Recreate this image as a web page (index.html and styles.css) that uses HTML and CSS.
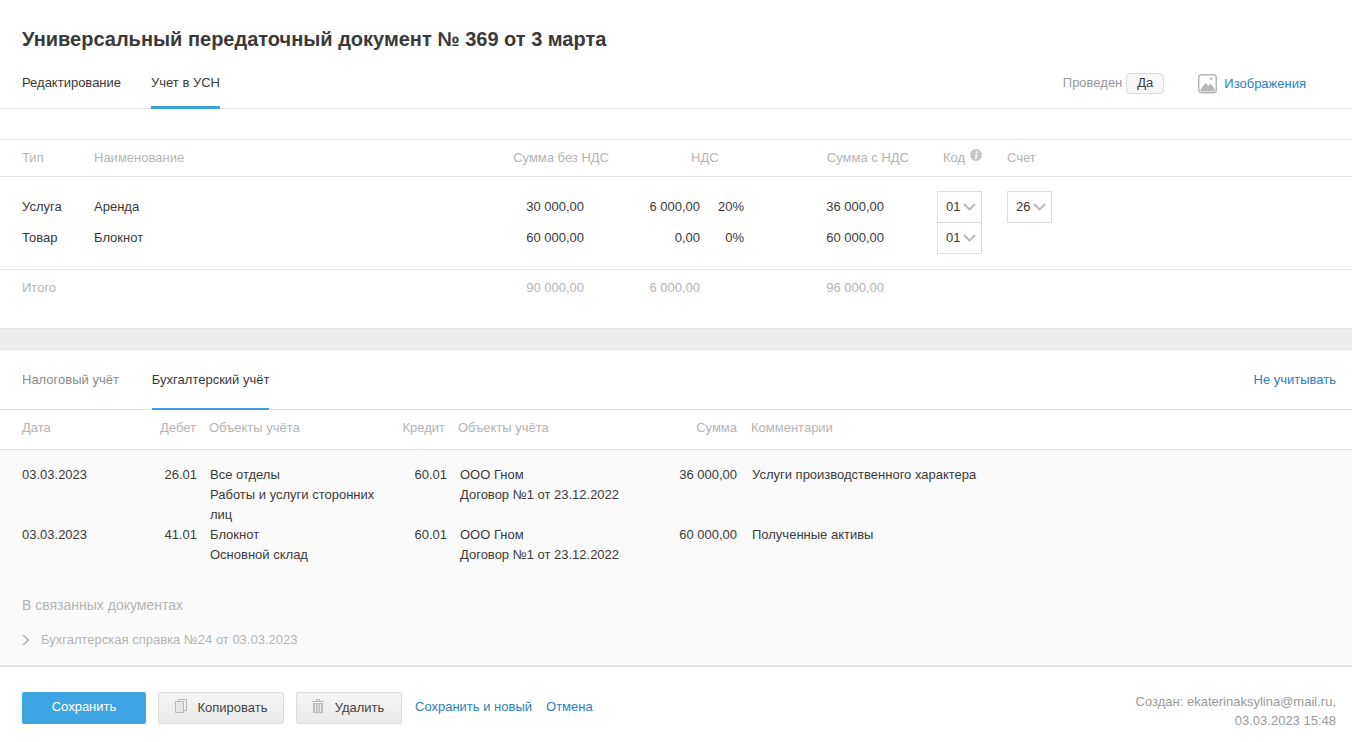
FILE: index.html
```html
<!DOCTYPE html>
<html lang="ru">
<head>
<meta charset="utf-8">
<title>Универсальный передаточный документ</title>
<link rel="stylesheet" href="styles.css">
</head>
<body>
<header class="doc-head">
  <h1 class="doc-title">Универсальный передаточный документ № 369 от 3 марта</h1>
  <div class="doc-bar">
    <nav class="tabs">
      <a class="tab">Редактирование</a>
      <a class="tab tab-active">Учет в УСН</a>
    </nav>
    <div class="doc-tools">
      <span class="posted-label">Проведен</span>
      <span class="posted-pill">Да</span>
      <svg class="img-icon" width="20" height="20" viewBox="0 0 20 20"><rect x="0.750" y="0.750" width="17.500" height="18" rx="3" fill="#fff" stroke="#b8b8b8" stroke-width="1.500"/><path d="M2.500 17.500V15.500L7.500 9L10.500 12L12.500 9.500L16.500 14.500V17.500Z" fill="#b8b8b8"/><circle cx="13" cy="4.800" r="1.300" fill="#b8b8b8"/></svg>
      <a class="link">Изображения</a>
    </div>
  </div>
</header>

<section class="usn">
  <div class="usn-grid usn-head">
    <div>Тип</div>
    <div>Наименование</div>
    <div class="num">Сумма без НДС</div>
    <div class="head-vat">НДС</div>
    <div class="num">Сумма с НДС</div>
    <div class="head-code">Код <svg class="info" width="12" height="12" viewBox="0 0 12 12"><circle cx="6" cy="6" r="6" fill="#c6c6c6"/><path d="M5.600 5H7.400L6.700 9.700H4.900Z" fill="#fff"/><path d="M5.900 2.400H7.700L7.500 4.100H5.700Z" fill="#fff"/></svg></div>
    <div>Счет</div>
  </div>
  <div class="usn-body">
    <div class="usn-grid usn-row">
      <div>Услуга</div>
      <div>Аренда</div>
      <div class="num val-sum">30 000,00</div>
      <div class="num">6 000,00</div>
      <div class="num">20%</div>
      <div class="num val-sum">36 000,00</div>
      <div class="sel">01<svg width="13" height="8" viewBox="0 0 13 8"><path d="M1 1L6.500 6.500L12 1" fill="none" stroke="#bbb" stroke-width="2"/></svg></div>
      <div class="sel">26<svg width="13" height="8" viewBox="0 0 13 8"><path d="M1 1L6.500 6.500L12 1" fill="none" stroke="#bbb" stroke-width="2"/></svg></div>
    </div>
    <div class="usn-grid usn-row">
      <div>Товар</div>
      <div>Блокнот</div>
      <div class="num val-sum">60 000,00</div>
      <div class="num">0,00</div>
      <div class="num">0%</div>
      <div class="num val-sum">60 000,00</div>
      <div class="sel">01<svg width="13" height="8" viewBox="0 0 13 8"><path d="M1 1L6.500 6.500L12 1" fill="none" stroke="#bbb" stroke-width="2"/></svg></div>
    </div>
  </div>
  <div class="usn-grid usn-total">
    <div>Итого</div>
    <div></div>
    <div class="num val-sum">90 000,00</div>
    <div class="num">6 000,00</div>
    <div></div>
    <div class="num val-sum">96 000,00</div>
  </div>
</section>

<div class="band"></div>

<section class="acc">
  <div class="acc-bar">
    <nav class="tabs">
      <a class="tab tab-muted">Налоговый учёт</a>
      <a class="tab tab-active">Бухгалтерский учёт</a>
    </nav>
    <a class="link">Не учитывать</a>
  </div>
  <div class="acc-grid acc-head">
    <div>Дата</div>
    <div class="num">Дебет</div>
    <div>Объекты учёта</div>
    <div class="num">Кредит</div>
    <div>Объекты учёта</div>
    <div class="num">Сумма</div>
    <div>Комментарии</div>
  </div>
  <div class="acc-body">
    <div class="acc-grid acc-row">
      <div>03.03.2023</div>
      <div class="num">26.01</div>
      <div>Все отделы<br>Работы и услуги сторонних лиц</div>
      <div class="num">60.01</div>
      <div>ООО Гном<br>Договор №1 от 23.12.2022</div>
      <div class="num">36 000,00</div>
      <div>Услуги производственного характера</div>
    </div>
    <div class="acc-grid acc-row">
      <div>03.03.2023</div>
      <div class="num">41.01</div>
      <div>Блокнот<br>Основной склад</div>
      <div class="num">60.01</div>
      <div>ООО Гном<br>Договор №1 от 23.12.2022</div>
      <div class="num">60 000,00</div>
      <div>Полученные активы</div>
    </div>
    <h2 class="rel-title">В связанных документах</h2>
    <div class="rel-item">
      <svg width="8" height="12" viewBox="0 0 8 12"><path d="M1 1L6.500 6L1 11" fill="none" stroke="#b0b0b0" stroke-width="1.600"/></svg>
      <span>Бухгалтерская справка №24 от 03.03.2023</span>
    </div>
  </div>
</section>

<footer class="foot">
  <div class="foot-actions">
    <button class="btn btn-primary">Сохранить</button>
    <button class="btn btn-copy"><svg width="12" height="14" viewBox="0 0 12 14"><path d="M3.500 0.500H11.500V11.500H3.500Z" fill="#f0f0f0" stroke="#b8b8b8"/><path d="M0.500 2.500H8.500V13.500H0.500Z" fill="#e6e6e6" stroke="#b8b8b8"/></svg>Копировать</button>
    <button class="btn btn-del"><svg width="12" height="14" viewBox="0 0 12 14"><path d="M0 2H12V3H0ZM4 0H8V2H7V1H5V2H4Z" fill="#b8b8b8"/><path d="M1 4H11V14H1Z" fill="#bcbcbc"/><path d="M3.500 5V13M6 5V13M8.500 5V13" stroke="#ececec"/></svg>Удалить</button>
    <a class="link link-save">Сохранить и новый</a>
    <a class="link link-cancel">Отмена</a>
  </div>
  <div class="created">Создан: ekaterinaksylina@mail.ru,<br>03.03.2023 15:48</div>
</footer>
</body>
</html>
```

FILE: styles.css
```css
* { box-sizing: border-box; }
html, body { margin: 0; padding: 0; }
body {
  width: 1352px;
  height: 742px;
  overflow: hidden;
  background: #fff;
  font-family: "Liberation Sans", Arial, sans-serif;
  font-size: 13px;
  line-height: 20px;
  color: #3a3a3a;
}
.link { color: #2b7fc3; }
.num { text-align: right; }

.doc-head { height: 109px; border-bottom: 1px solid #e4e4e4; }
.doc-title {
  margin: 0;
  padding: 27px 22px 0;
  font-size: 20px;
  line-height: 24px;
  font-weight: bold;
  color: #3a3a3a;
}
.doc-bar {
  display: flex;
  justify-content: space-between;
  align-items: flex-start;
  padding: 22px 46px 0 22px;
}
.tabs { display: flex; gap: 30px; }
.tab { display: block; height: 36px; }
.tab-active { border-bottom: 3px solid #3ca2de; }
.tab-muted { color: #8a8a8a; }
.doc-tools { display: flex; align-items: center; height: 20px; }
.posted-label { color: #999; }
.posted-pill {
  width: 38px;
  height: 21px;
  margin-left: 4px;
  border: 1px solid #ddd;
  border-radius: 4px;
  background: #f7f7f7;
  text-align: center;
  line-height: 18px;
}
.img-icon { margin: 2px 6px 0 34px; }
.doc-tools .link { padding-top: 2px; }

.usn { margin-top: 30px; border-top: 1px solid #e4e4e4; height: 190px; border-bottom: 1px solid #e4e4e4; }
.usn-grid {
  display: grid;
  grid-template-columns: 72px 393px 122px 135px 165px 28px 70px 1fr;
  padding-left: 22px;
}
.usn-head {
  height: 37px;
  align-items: center;
  border-bottom: 1px solid #e4e4e4;
  color: #b4b4b4;
}
.head-vat { padding-left: 82px; }
.head-code { grid-column: 7; padding-left: 6px; }
.info { margin-left: 1px; vertical-align: 1px; }
.usn-body { padding: 14px 0 16px; border-bottom: 1px solid #e4e4e4; }
.usn-row { grid-template-columns: 72px 393px 122px 91px 44px 165px 28px 70px 1fr; height: 31px; align-items: center; }
.usn-row > :nth-child(7) { grid-column: 8; }
.val-sum { padding-right: 25px; }
.sel {
  display: flex;
  align-items: center;
  gap: 3px;
  align-self: start;
  width: 45px;
  height: 32px;
  padding-left: 8px;
  border: 1px solid #ddd;
  background: #fff;
}
.usn-total {
  grid-template-columns: 72px 393px 122px 91px 44px 165px;
  padding-top: 8px;
  color: #b4b4b4;
}

.band { height: 21px; background: #ececec; border-bottom: 1px solid #e4e4e4; }

.acc-bar {
  display: flex;
  justify-content: space-between;
  height: 60px;
  padding: 20px 16px 0 22px;
  border-bottom: 1px solid #e4e4e4;
}
.acc-bar .tabs { gap: 33px; }
.acc-bar .tab { height: 40px; border-bottom-width: 2px; }
.acc-bar .tab-muted { border: 0; }
.acc-grid {
  display: grid;
  padding-left: 22px;
}
.acc-head {
  grid-template-columns: 122px 52px 13px 180px 56px 13px 180px 99px 14px 1fr;
  height: 40px;
  padding-bottom: 4px;
  align-items: center;
  border-bottom: 1px solid #e4e4e4;
  color: #b4b4b4;
}
.acc-head > :nth-child(3), .acc-row > :nth-child(3) { grid-column: 4; }
.acc-head > :nth-child(4), .acc-row > :nth-child(4) { grid-column: 5; }
.acc-head > :nth-child(5), .acc-row > :nth-child(5) { grid-column: 7; }
.acc-head > :nth-child(6), .acc-row > :nth-child(6) { grid-column: 8; }
.acc-head > :nth-child(7), .acc-row > :nth-child(7) { grid-column: 10; }
.acc-row {
  grid-template-columns: 130px 45px 13px 170px 67px 13px 180px 97px 15px 1fr;
}
.acc-body {
  height: 217px;
  padding-top: 15px;
  background: #fafafa;
  border-bottom: 2px solid #e4e4e4;
}
.rel-title {
  margin: 30px 0 0 22px;
  font-size: 14px;
  line-height: 20px;
  font-weight: normal;
  color: #b4b4b4;
}
.rel-item {
  display: flex;
  align-items: center;
  gap: 11px;
  margin: 15px 0 0 22px;
  color: #b4b4b4;
}

.foot {
  display: flex;
  justify-content: space-between;
  padding: 25px 16px 0 22px;
}
.foot-actions { display: flex; align-items: flex-start; }
.btn {
  display: flex;
  align-items: center;
  justify-content: center;
  height: 32px;
  margin: 0;
  border-radius: 2px;
  font: inherit;
  color: #444;
}
.btn-primary { width: 124px; border: 0; background: #3ca5e2; color: #fff; margin-right: 12px; padding-bottom: 3px; }
.btn-copy, .btn-del {
  border: 1px solid #dcdcdc;
  background: linear-gradient(#f5f5f5, #eaeaea);
}
.btn svg { margin: 0 11px 4px 0; }
.btn-copy { width: 126px; margin-right: 12px; }
.btn-del { width: 106px; margin-right: 13px; padding: 0 2px 0 0; }
.link-save { padding-top: 5px; margin-right: 14px; }
.link-cancel { padding-top: 5px; }
.created { text-align: right; color: #999; line-height: 19px; }
```
